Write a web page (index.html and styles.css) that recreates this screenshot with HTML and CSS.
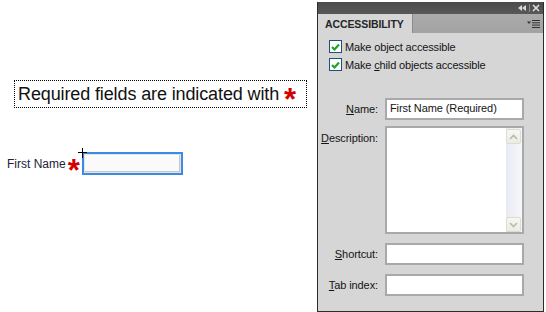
FILE: index.html
```html
<!DOCTYPE html>
<html>
<head>
<meta charset="utf-8">
<link rel="stylesheet" href="styles.css">
</head>
<body>
<div class="stage">
  <div class="heading">Required fields are indicated with <span class="req big">*</span></div>
  <div class="field">
    <span class="field-label">First Name</span>
    <span class="req small">*</span>
    <span class="textbox"><span class="cursor"></span></span>
  </div>
</div>

<div class="panel">
  <div class="titlebar">
    <svg class="tb-icon" width="22" height="8" viewBox="0 0 22 8">
      <path d="M4 1 L0 4 L4 7 Z M8 1 L4 4 L8 7 Z" fill="#d8d8d8"/>
      <rect x="11" y="0" width="1" height="8" fill="#8a8a8a"/>
      <path d="M15 1 L21 7 M21 1 L15 7" stroke="#e0e0e0" stroke-width="1.6"/>
    </svg>
  </div>
  <div class="tabrow">
    <div class="tab">ACCESSIBILITY</div>
    <svg class="menu" width="13" height="8" viewBox="0 0 13 8">
      <path d="M0 1.5 H4 L2 4 Z" fill="#333"/>
      <rect x="5" y="0" width="8" height="1" fill="#333"/>
      <rect x="5" y="2.3" width="8" height="1" fill="#333"/>
      <rect x="5" y="4.6" width="8" height="1" fill="#333"/>
      <rect x="5" y="7" width="8" height="1" fill="#333"/>
    </svg>
  </div>
  <div class="pbody">
    <div class="check">
      <span class="box"><svg width="9" height="8" viewBox="0 0 9 8"><path d="M1 4 L3.5 6.5 L8 1.5" stroke="#21a32a" stroke-width="2.2" fill="none"/></svg></span>
      <span>Make object accessible</span>
    </div>
    <div class="check">
      <span class="box"><svg width="9" height="8" viewBox="0 0 9 8"><path d="M1 4 L3.5 6.5 L8 1.5" stroke="#21a32a" stroke-width="2.2" fill="none"/></svg></span>
      <span>Make <u>c</u>hild objects accessible</span>
    </div>

    <div class="form">
      <div class="row">
        <span class="lbl"><u>N</u>ame:</span>
        <span class="input">First Name (Required)</span>
      </div>
      <div class="row desc">
        <span class="lbl top"><u>D</u>escription:</span>
        <span class="input area">
          <span class="scroll">
            <span class="sbtn"><svg width="9" height="6" viewBox="0 0 9 6"><path d="M1 5 L4.5 1.5 L8 5" stroke="#b9b9b0" stroke-width="1.6" fill="none"/></svg></span>
            <span class="sbtn"><svg width="9" height="6" viewBox="0 0 9 6"><path d="M1 1 L4.5 4.5 L8 1" stroke="#b9b9b0" stroke-width="1.6" fill="none"/></svg></span>
          </span>
        </span>
      </div>
      <div class="row">
        <span class="lbl"><u>S</u>hortcut:</span>
        <span class="input"></span>
      </div>
      <div class="row">
        <span class="lbl"><u>T</u>ab index:</span>
        <span class="input"></span>
      </div>
    </div>
  </div>
</div>
</body>
</html>
```

FILE: styles.css
```css
html, body {
  margin: 0;
  padding: 0;
}
body {
  width: 546px;
  height: 312px;
  background: #ffffff;
  display: flex;
  align-items: flex-start;
  overflow: hidden;
  font-family: "Liberation Sans", Arial, sans-serif;
}

/* ---------- left stage ---------- */
.stage {
  width: 317px;
  flex: none;
  display: flex;
  flex-direction: column;
  align-items: flex-start;
}
.heading {
  margin: 80px 0 0 14px;
  width: 293px;
  height: 28px;
  box-sizing: border-box;
  border: 1px dotted #000;
  padding-left: 3px;
  font-size: 18px;
  line-height: 26px;
  color: #111;
  white-space: nowrap;
  letter-spacing: -0.12px;
}
.req {
  color: #d40000;
  font-weight: bold;
  display: inline-block;
  line-height: 1;
}
.req.big {
  font-size: 31px;
  vertical-align: -10px;
  margin-left: 0;
  letter-spacing: 0;
}
.field {
  margin: 44px 0 0 7px;
  display: flex;
  align-items: flex-start;
  height: 23px;
}
.field-label {
  font-size: 12px;
  color: #23233a;
  line-height: 14px;
  margin-top: 5px;
}
.req.small {
  font-size: 31px;
  line-height: 31px;
  height: 23px;
  margin: 3px 2px 0 2px;
}
.textbox {
  position: relative;
  width: 101px;
  height: 23px;
  box-sizing: border-box;
  border: 2px solid #3a8ae6;
  background: #fafafa;
  box-shadow: inset 0 0 0 1px #e4e4e4, inset -2px -2px 0 #c6c6c6;
}
.cursor {
  position: absolute;
  left: -6px;
  top: -6px;
  width: 9px;
  height: 10px;
}
.cursor::before {
  content: "";
  position: absolute;
  left: 0;
  top: 4px;
  width: 9px;
  height: 1px;
  background: #000;
}
.cursor::after {
  content: "";
  position: absolute;
  left: 4px;
  top: 0;
  width: 1px;
  height: 10px;
  background: #000;
}

/* ---------- panel ---------- */
.panel {
  margin-top: 2px;
  width: 227px;
  height: 310px;
  box-sizing: border-box;
  border: 1px solid #2c2c2c;
  border-top: none;
  background: #d6d6d6;
  display: flex;
  flex-direction: column;
  font-size: 11px;
  color: #141414;
}
.titlebar {
  height: 12px;
  flex: none;
  background: linear-gradient(#4a4a4a, #585858);
  display: flex;
  justify-content: flex-end;
  align-items: center;
  padding-right: 3px;
}
.tabrow {
  height: 19px;
  flex: none;
  background: linear-gradient(#ababab, #a2a2a2);
  display: flex;
  align-items: stretch;
}
.tab {
  width: 95px;
  box-sizing: border-box;
  background: #d6d6d6;
  border-right: 1px solid #8c8c8c;
  padding-left: 7px;
  font-weight: bold;
  font-size: 10.5px;
  line-height: 20px;
  color: #262626;
  letter-spacing: -0.1px;
}
.menu {
  margin-left: auto;
  margin-right: 3px;
  align-self: center;
}
.pbody {
  padding: 7px 0 0 11px;
  display: flex;
  flex-direction: column;
}
.check {
  display: flex;
  align-items: center;
  gap: 3px;
  height: 13px;
  margin-bottom: 5px;
  white-space: nowrap;
  letter-spacing: -0.15px;
}
.box {
  width: 13px;
  height: 13px;
  box-sizing: border-box;
  border: 1px solid #1c4f7c;
  background: #fff;
  display: flex;
  align-items: center;
  justify-content: center;
}
.form {
  margin: 22px 0 0 -11px;
  display: flex;
  flex-direction: column;
}
.row {
  display: flex;
  gap: 7px;
}
.row + .row {
  margin-top: 9px;
}
.row.desc {
  margin-top: 6px;
}
.lbl {
  width: 60px;
  text-align: right;
  line-height: 22px;
  white-space: nowrap;
  letter-spacing: -0.1px;
}
.lbl.top {
  line-height: 14px;
  padding-top: 5px;
}
.input {
  width: 139px;
  height: 22px;
  box-sizing: border-box;
  border: 2px solid #a9a9a9;
  background: #fff;
  line-height: 17px;
  padding-left: 3px;
  letter-spacing: -0.1px;
}
.input.area {
  height: 108px;
  padding: 0;
  display: flex;
  justify-content: flex-end;
}
.scroll {
  width: 16px;
  background: linear-gradient(90deg, #e9ebf3, #f6f7fb);
  display: flex;
  flex-direction: column;
  justify-content: space-between;
  padding: 1px 1px 0 0;
  box-sizing: border-box;
}
.sbtn {
  height: 15px;
  box-sizing: border-box;
  border: 1px solid #dcdcd0;
  border-radius: 2px;
  background: linear-gradient(#f7f7f2, #ecece4);
  display: flex;
  align-items: center;
  justify-content: center;
}
```
